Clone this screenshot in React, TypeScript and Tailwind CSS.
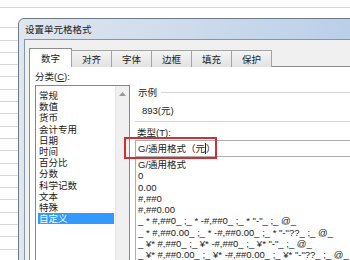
import React from 'react';

const categories = ['常规', '数值', '货币', '会计专用', '日期', '时间', '百分比', '分数', '科学记数', '文本', '特殊', '自定义'];

const formats = [
  'G/通用格式',
  '0',
  '0.00',
  '#,##0',
  '#,##0.00',
  '_ * #,##0_ ;_ * -#,##0_ ;_ * "-"_ ;_ @_',
  '_ * #,##0.00_ ;_ * -#,##0.00_ ;_ * "-"??_ ;_ @_',
  '_ ¥* #,##0_ ;_ ¥* -#,##0_ ;_ ¥* "-"_ ;_ @_',
  '_ ¥* #,##0.00_ ;_ ¥* -#,##0.00_ ;_ ¥* "-"??_ ;_ @_',
];

const tabs = ['对齐', '字体', '边框', '填充', '保护'];

const rows = Array.from({ length: 20 });

export default function App() {
  return (
    <div className="relative w-[350px] h-[260px] overflow-hidden bg-white font-['Liberation_Sans','Noto_Sans_CJK_SC',sans-serif] text-[9.5px] text-[#222]">
      {/* spreadsheet behind the dialog */}
      <div className="flex flex-col">
        <div className="h-[8px] border-b border-[#d6d6d6]" />
        <div className="h-[8px]" />
        {rows.map((_, i) => (
          <div key={i} className="h-[12.3px] border-b border-[#d6d6d6]" />
        ))}
      </div>

      {/* dialog window */}
      <div className="absolute left-[18px] top-[18px] w-[345px] h-[260px] rounded-tl-[6px] border border-[#6f7b89] bg-gradient-to-r from-[#dfe6ee] via-[#cddbeb] to-[#b8cfe9] flex flex-col">
        <div className="h-[20px] flex items-center pl-[6px] leading-[11px] text-[#1a1a1a]">设置单元格格式</div>

        <div className="ml-[5px] flex-1 flex flex-col border-l border-t border-[#8696a9] bg-[#f0f0f0]">
          {/* tabs */}
          <div className="relative z-10 flex items-end pt-[8px] pl-[4px] -mb-px">
            <div className="w-[43px] h-[19px] flex items-center justify-center border border-b-0 border-[#8c8c8c] bg-white leading-[11px]">
              数字
            </div>
            {tabs.map((t) => (
              <div
                key={t}
                className="w-[41px] h-[17px] -ml-px flex items-center justify-center border border-b-0 border-[#a3a3a3] bg-gradient-to-b from-[#f4f4f4] to-[#e2e2e2] leading-[11px]"
              >
                {t}
              </div>
            ))}
          </div>

          {/* tab page */}
          <div className="ml-[4px] flex-1 flex border-l border-t border-[#8c8c8c] bg-white">
            {/* category */}
            <div className="pl-[5px] pt-[4px] flex flex-col">
              <div className="h-[11px] leading-[11px]">
                分类(<span className="underline">C</span>):
              </div>
              <div className="mt-[3px] w-[95px] flex-1 flex border border-[#828790]">
                <div className="w-[79px] pt-[4px] flex flex-col">
                  {categories.map((c) => (
                    <div
                      key={c}
                      className={
                        c === '自定义'
                          ? 'ml-[2px] w-[76px] h-[11.2px] pl-[1px] leading-[11.2px] bg-[#3399ff] text-white'
                          : 'ml-[2px] h-[11.2px] pl-[1px] leading-[11.2px]'
                      }
                    >
                      {c}
                    </div>
                  ))}
                </div>
                <div className="w-[14px] border-l border-[#e4e4e4] bg-[#f0f0f0] flex flex-col">
                  <div className="h-[16px] flex items-center justify-center">
                    <svg width="7" height="4" viewBox="0 0 7 4">
                      <path d="M0 4 L3.5 0 L7 4 Z" fill="#9a9a9a" />
                    </svg>
                  </div>
                </div>
              </div>
            </div>

            {/* sample + type */}
            <div className="ml-[5px] flex-1 flex flex-col">
              <div className="mt-[20px] h-[11px] flex items-center">
                <span className="pl-[3px] pr-[4px] leading-[11px]">示例</span>
                <div className="flex-1 border-t border-[#d5d5d5]" />
              </div>
              <div className="mt-[7px] h-[11px] pl-[7px] leading-[11px]">893(元)</div>
              <div className="mt-[5px] border-t border-[#d5d5d5]" />
              <div className="mt-[5px] h-[11px] pl-[2px] leading-[11px]">
                类型(<span className="underline">T</span>):
              </div>
              <div className="mt-[2px] h-[17px] flex items-center border border-[#abadb3] pl-[2px] leading-[11px]">
                G/通用格式（元<span className="inline-block w-px h-[11px] bg-[#222]" />）
              </div>
              <div className="flex-1 border-l border-[#abadb3] pt-[2px] pl-[2px] flex flex-col whitespace-pre">
                {formats.map((f, i) => (
                  <div key={i} className="h-[11.3px] leading-[11.3px]">
                    {f}
                  </div>
                ))}
              </div>
            </div>
          </div>
        </div>
      </div>

      {/* red annotation box */}
      <div className="absolute left-[124px] top-[137px] w-[93px] h-[22px] border-2 border-[#d42f2f]" />
    </div>
  );
}
